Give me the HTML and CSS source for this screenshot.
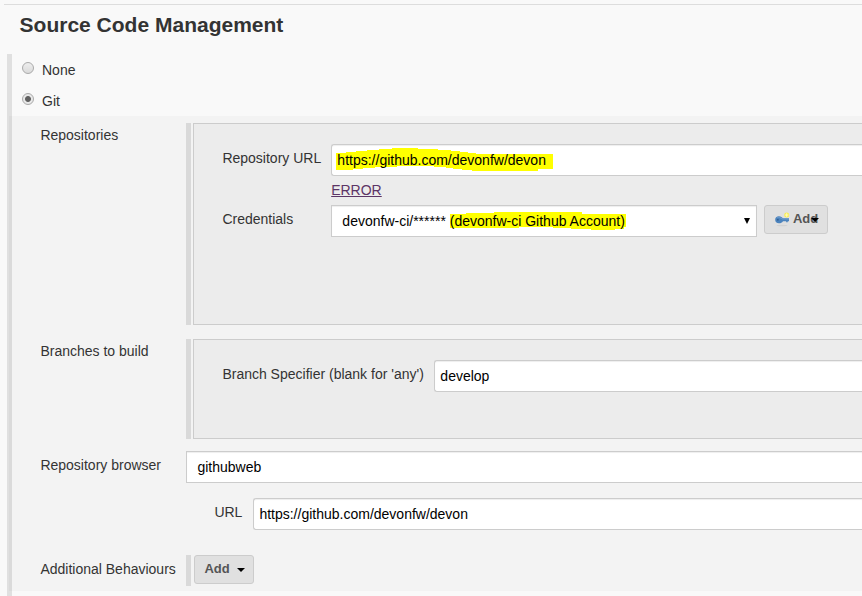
FILE: index.html
```html
<!DOCTYPE html>
<html lang="en">
<head>
<meta charset="utf-8">
<title>Source Code Management</title>
<link rel="stylesheet" href="styles.css">
</head>
<body>
<h1 class="section-title">Source Code Management</h1>
<main class="scm">
  <div class="option"><span class="radio"></span><span>None</span></div>
  <div class="option"><span class="radio checked"></span><span>Git</span></div>
  <div class="git">
    <section class="row repositories">
      <div class="label">Repositories</div>
      <div class="chunk"><div class="box">
        <div class="field url-field">
          <div class="label">Repository URL</div>
          <div class="input"><span class="marked"><svg class="marker" width="218" height="26" viewBox="0 0 218 26"><path d="M0 5H10V4H20V3H31V2H43V1H56V0H82V1H102V2H115V3H124V4H132V5H140V6H217V21H202V23H136V22H126V21H117V20H110V19H98V18H61V19H39V20H27V21H17V22H0Z"/></svg><span class="value">https://github.com/devonfw/devon</span></span></div>
        </div>
        <a class="error">ERROR</a>
        <div class="field credentials">
          <div class="label">Credentials</div>
          <div class="input select">devonfw-ci/******&nbsp;<span class="marked"><svg class="marker account" width="177" height="22" viewBox="0 0 177 22"><path d="M0 3H16V2H44V1H132V3H176V16H174V18H165V19H141V18H121V17H103V16H69V17H0Z"/></svg><span class="value">(devonfw-ci Github Account)</span></span><span class="select-arrow"></span></div>
          <div class="button key-button">
            <svg width="16" height="16" viewBox="0 0 16 16"><ellipse cx="7" cy="14.5" rx="5.5" ry=".8" fill="#d2d2d2"/><path d="M4 5.2c2 0 3 1 3.8 2L14 7.2v3h-1.3v1h-1.5v-1H8C7 11.6 5.8 12.3 4 12.3 1.5 12.3.2 11 .2 8.8S1.5 5.2 4 5.2Z" fill="#4b83bd"/><path d="M2 6.8c2-.8 4 0 5 1.2h7" fill="none" stroke="#6d9bcc"/><circle cx="2.8" cy="8.7" r="1" fill="#315f94"/><circle cx="11.7" cy="4" r="2.5" fill="#f8ec4f"/><path d="M11.7 2.2v3.6M9.9 4h3.6" stroke="#fffac0"/></svg>
            <span>Add</span><i class="caret"></i>
          </div>
        </div>
      </div></div>
    </section>
    <section class="row branches">
      <div class="label">Branches to build</div>
      <div class="chunk"><div class="box">
        <div class="field branch-field">
          <div class="label">Branch Specifier (blank for 'any')</div>
          <div class="input">develop</div>
        </div>
      </div></div>
    </section>
    <section class="row browser">
      <div class="label">Repository browser</div>
      <div class="input select">githubweb</div>
    </section>
    <div class="field browser-url">
      <div class="label">URL</div>
      <div class="input">https://github.com/devonfw/devon</div>
    </div>
    <section class="row behaviours">
      <div class="label">Additional Behaviours</div>
      <div class="chunk"><div class="button add-button"><span>Add</span><i class="caret"></i></div></div>
    </section>
  </div>
</main>
</body>
</html>
```
FILE: styles.css
```css
* { box-sizing: border-box; }
html { background: #f9f9f9; }
body {
  display: flow-root;
  width: 862px;
  height: 596px;
  margin: 0;
  overflow: hidden;
  background: #f9f9f9;
  color: #333;
  font: 14px/20px "Liberation Sans", Arial, sans-serif;
}
.section-title {
  height: 50px;
  margin: 4px 0 0 4px;
  padding: 8px 0 0 15.6px;
  border-top: 1px solid #ddd;
  font-size: 21px;
  line-height: 24px;
}
.scm { height: 542px; margin-left: 7px; border-left: 5px solid #e0e0e0; }
.option { display: flex; height: 31px; padding: 6px 0 0 10px; gap: 8px; }
.radio {
  width: 12px;
  height: 12px;
  margin-top: 2px;
  border: 1px solid #aaa;
  border-radius: 50%;
  background: linear-gradient(#eee, #dadada);
}
.checked { background: radial-gradient(circle, #606060 0 2.5px, #e8e8e8 3.4px); }
.git {
  height: 475px;
  margin-left: -3px;
  padding-top: 7px;
  border-left: 3px solid #dadada;
  background: #f3f3f3;
}
.row { display: grid; grid-template-columns: 145.6px 1fr; padding-left: 28.4px; }
.row > .label { padding-top: 2px; }
.label { white-space: nowrap; }
.chunk { padding-left: 2px; border-left: 5px solid #d9d9d9; }
.box { height: 100%; border: 1px solid #ccc; border-right: 0; background: #ececec; }
.repositories { height: 202px; }
.repositories .box { padding: 20px 0 0 28.4px; }
.field { display: grid; }
.url-field { grid-template-columns: 108.6px 1fr; }
.field > .label { padding-top: 4px; }
.input {
  height: 32px;
  padding: 5px 5px 5px 5.4px;
  border: 1px solid #ccc;
  border-right: 0;
  border-radius: 3px 0 0 3px;
  background: #fff;
  box-shadow: inset 0 1px 1px rgba(0, 0, 0, .07);
  color: #000;
  white-space: nowrap;
}
.select { padding-left: 10.4px; border-radius: 0; }
.marked { position: relative; display: inline-block; }
.marker { position: absolute; top: -2px; left: -1px; fill: #ff0; }
.account { top: 0; left: 0; }
.value { position: relative; }
.error { display: block; width: max-content; margin: 4px 0 5px 108.8px; color: #5c3566; text-decoration: underline; }
.credentials { grid-template-columns: 108.6px 426px 64px; }
.credentials .select { display: flex; padding-right: 0; border-right: 1px solid #ccc; }
.select-arrow {
  width: 0;
  height: 0;
  margin: 7px 6px 0 auto;
  border: 3.5px solid transparent;
  border-top: 6px solid #000;
  border-bottom: 0;
}
.button {
  display: flex;
  align-items: center;
  height: 29px;
  border: 1px solid #ccc;
  border-radius: 3px;
  background: #e0e0e0;
  color: #555;
  font-size: 13px;
  font-weight: bold;
}
.key-button { width: 64px; margin-left: 7px; padding: 0 0 2px 10px; }
.key-button span { margin-left: 2px; }
.caret { width: 0; height: 0; border: 4px solid transparent; border-top-color: #000; border-bottom: 0; }
.key-button .caret { margin-left: -7px; margin-top: 2px; }
.branches { height: 100px; margin-top: 14px; }
.branches .box { padding: 20px 0 0 28.4px; }
.branch-field { grid-template-columns: 211.6px 1fr; }
.browser { margin-top: 12px; }
.browser > .label, .behaviours > .label { padding-top: 4px; }
.browser-url { grid-template-columns: 38.6px 1fr; margin: 15px 0 0 202.4px; }
.behaviours { height: 31px; margin-top: 25px; }
.behaviours .chunk { padding-left: 3px; }
.add-button { width: 60px; padding: 0 0 2px 9.5px; }
.add-button .caret { margin: 3px 0 0 7px; }
```
